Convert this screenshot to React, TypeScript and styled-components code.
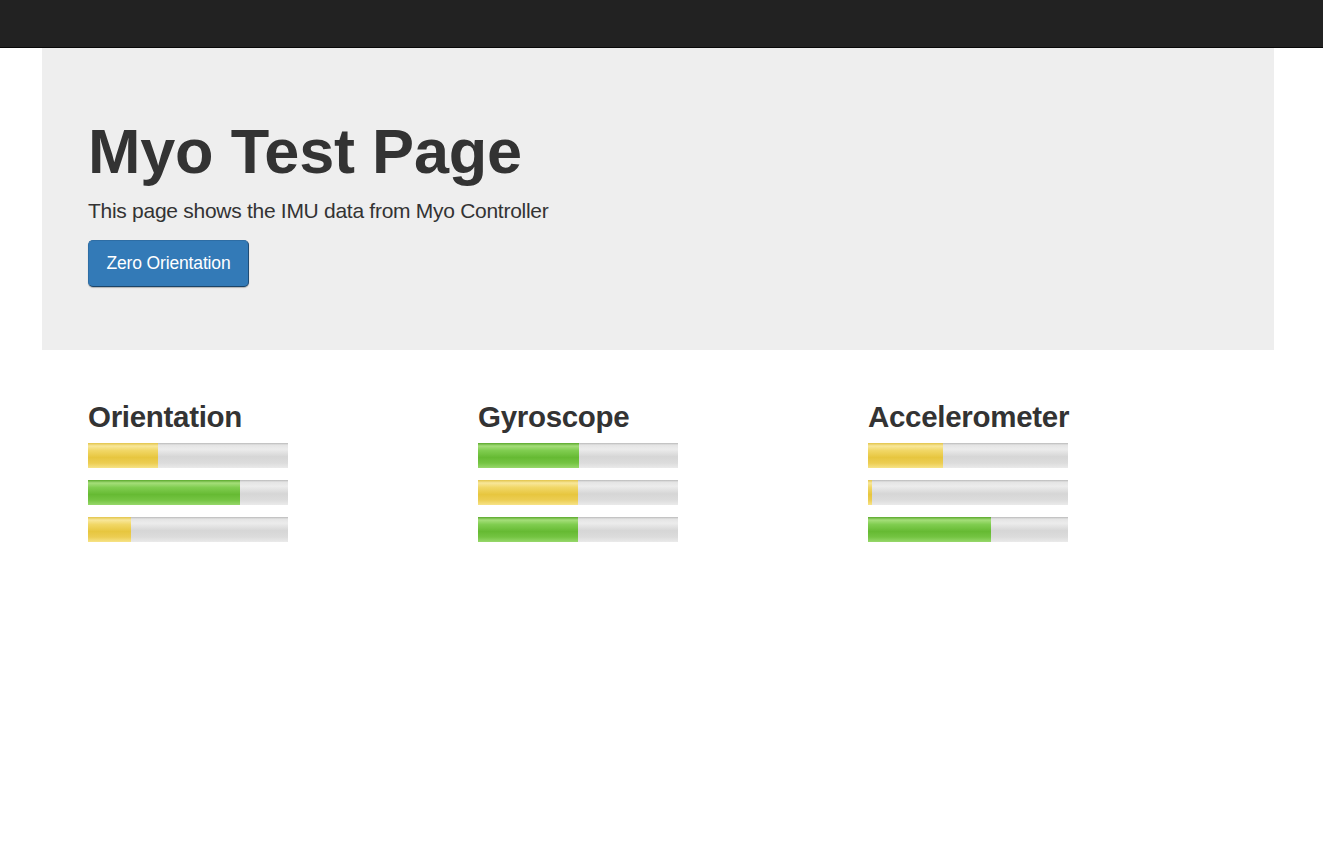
import React from "react";
import styled, { createGlobalStyle } from "styled-components";

const Global = createGlobalStyle`
  html, body { margin: 0; padding: 0; background: #fff; }
  body {
    font-family: "Liberation Sans", Arial, Helvetica, sans-serif;
    color: #333;
    font-size: 14px;
    line-height: 1.42857;
  }
  * { box-sizing: border-box; }
`;

const Navbar = styled.div`
  height: 48px;
  background: #222;
  border-bottom: 1px solid #080808;
`;

const Jumbotron = styled.div`
  margin: 0 49px 30px 42px;
  background: #eee;
  padding: 69px 46px 48px;
`;

const Title = styled.h1`
  margin: 0 0 10px;
  font-size: 63px;
  font-weight: 700;
  line-height: 69px;
  color: #333;
  letter-spacing: -0.2px;
`;

const Lead = styled.p`
  margin: 0 0 15px;
  font-size: 21px;
  line-height: 29px;
  font-weight: 400;
  color: #333;
  letter-spacing: -0.28px;
`;

const ButtonRow = styled.p`
  margin: 0 0 15px;
`;

const PrimaryButton = styled.button`
  display: inline-flex;
  align-items: center;
  justify-content: center;
  width: 161px;
  height: 47px;
  padding: 0 10px;
  font-family: "Liberation Sans", Arial, sans-serif;
  font-size: 17.5px;
  letter-spacing: -0.15px;
  color: #fff;
  background: #337ab7;
  border: 1px solid #2e6da4;
  border-bottom-color: #1b4468;
  border-right-color: #1f4c75;
  border-radius: 5px;
  box-shadow: 0 1px 1px rgba(0, 0, 0, 0.25);
  cursor: pointer;
`;

const Columns = styled.div`
  display: grid;
  grid-template-columns: repeat(3, 390px);
  padding-left: 88px;
`;

const Column = styled.div``;

const Heading = styled.h2`
  margin: 20px 0 10px;
  font-size: 29.5px;
  line-height: 33px;
  font-weight: 700;
  color: #333;
  letter-spacing: -0.3px;
`;

const Track = styled.div`
  width: 200px;
  height: 25px;
  margin-bottom: 12px;
  background: linear-gradient(
    to bottom,
    #b9b9b9 0%,
    #e4e4e4 8%,
    #ececec 25%,
    #d6d6d6 55%,
    #dcdcdc 80%,
    #eaeaea 100%
  );
  display: flex;
`;

const Fill = styled.div<{ $color: "yellow" | "green" }>`
  height: 100%;
  background: ${(p) =>
    p.$color === "yellow"
      ? `linear-gradient(to bottom, #e2c44a 0%, #f8e79a 12%, #f1d766 30%, #e7c63f 58%, #eccd52 80%, #f7e387 100%)`
      : `linear-gradient(to bottom, #5aa82c 0%, #a5de7a 12%, #80cd50 30%, #66ba33 58%, #74c442 80%, #97d86b 100%)`};
`;

type Bar = { pct: number; color: "yellow" | "green" };

const data: { title: string; bars: Bar[] }[] = [
  {
    title: "Orientation",
    bars: [
      { pct: 35, color: "yellow" },
      { pct: 76, color: "green" },
      { pct: 21.5, color: "yellow" },
    ],
  },
  {
    title: "Gyroscope",
    bars: [
      { pct: 50.5, color: "green" },
      { pct: 50, color: "yellow" },
      { pct: 50, color: "green" },
    ],
  },
  {
    title: "Accelerometer",
    bars: [
      { pct: 37.5, color: "yellow" },
      { pct: 2, color: "yellow" },
      { pct: 61.5, color: "green" },
    ],
  },
];

export default function App() {
  return (
    <>
      <Global />
      <Navbar />
      <Jumbotron>
        <Title>Myo Test Page</Title>
        <Lead>This page shows the IMU data from Myo Controller</Lead>
        <ButtonRow>
          <PrimaryButton>Zero Orientation</PrimaryButton>
        </ButtonRow>
      </Jumbotron>
      <Columns>
        {data.map((col) => (
          <Column key={col.title}>
            <Heading>{col.title}</Heading>
            {col.bars.map((b, i) => (
              <Track key={i}>
                <Fill $color={b.color} style={{ width: `${b.pct}%` }} />
              </Track>
            ))}
          </Column>
        ))}
      </Columns>
    </>
  );
}
